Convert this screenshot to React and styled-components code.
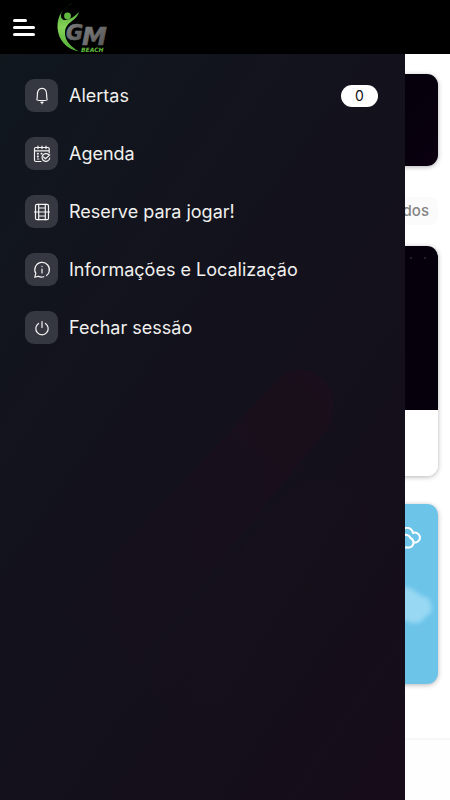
import React from 'react';
import styled, { createGlobalStyle } from 'styled-components';

const GlobalStyle = createGlobalStyle`
  * {
    box-sizing: border-box;
  }

  body {
    margin: 0;
    background: #ffffff;
    font-family: Inter, 'Liberation Sans', sans-serif;
  }

  button {
    font-family: inherit;
    border: 0;
    background: none;
    padding: 0;
    cursor: pointer;
  }
`;

const Page = styled.div`
  min-height: 100vh;
  display: flex;
  flex-direction: column;
`;

const TopBar = styled.header`
  display: flex;
  align-items: center;
  gap: 20px;
  height: 54px;
  padding: 0 12px;
  background: #000000;
`;

const MenuButton = styled.button`
  display: flex;
  flex-direction: column;
  justify-content: center;
  gap: 4px;
  width: 24px;
  height: 24px;
`;

const MenuLine = styled.span`
  width: ${({ $short }) => ($short ? '14px' : '22px')};
  height: 3px;
  margin-left: 1px;
  border-radius: 2px;
  background: #ffffff;
`;

const LogoSvg = styled.svg`
  width: 56px;
  height: 54px;
`;

const Body = styled.div`
  position: relative;
  flex: 1;
  display: flex;
  flex-direction: column;
`;

const Drawer = styled.nav`
  position: absolute;
  top: 0;
  bottom: 0;
  left: 0;
  width: 90%;
  overflow: hidden;
  background: linear-gradient(125deg, #10171d 0%, #13131d 35%, #140f1a 75%, #170c1a 100%);
`;

const DrawerPattern = styled.svg`
  position: absolute;
  inset: 0;
  width: 100%;
  height: 100%;
`;

const MenuList = styled.ul`
  position: relative;
  display: flex;
  flex-direction: column;
  gap: 25px;
  margin: 0;
  padding: 25px 27px 24px 25px;
  list-style: none;
`;

const MenuItem = styled.button`
  display: flex;
  align-items: center;
  gap: 11px;
  width: 100%;
  color: #f0f0ee;
  font-size: 18px;
  line-height: 33px;
  text-align: left;
`;

const IconBox = styled.span`
  display: flex;
  align-items: center;
  justify-content: center;
  width: 33px;
  height: 33px;
  border-radius: 9px;
  background: #353840;

  svg {
    width: 18px;
    height: 18px;
    fill: none;
    stroke: #f4f4f4;
    stroke-width: 1.2;
    stroke-linecap: round;
    stroke-linejoin: round;
  }
`;

const Label = styled.span`
  flex: 1;
`;

const Badge = styled.span`
  width: 37px;
  border-radius: 11px;
  background: #ffffff;
  color: #111111;
  font-size: 14px;
  line-height: 22px;
  text-align: center;
`;

const Feed = styled.main`
  flex: 1;
  display: flex;
  flex-direction: column;
  padding: 20px 12px 54px;
`;

const Card = styled.section`
  border-radius: 11px;
  overflow: hidden;
  box-shadow: 0 1px 5px rgba(0, 0, 0, 0.3);
`;

const Banner = styled(Card)`
  height: 92px;
  background: linear-gradient(135deg, #000000, #05000b 80%, #0b0010);
`;

const Filters = styled.div`
  display: flex;
  justify-content: flex-end;
  margin: 31px 0 21px;
`;

const Filter = styled.button`
  padding: 0 9px;
  border-radius: 8px;
  background: #fbfbfb;
  color: #858585;
  font-size: 15px;
  font-weight: 500;
  line-height: 28px;
`;

const PostImage = styled.div`
  display: flex;
  justify-content: flex-end;
  gap: 12px;
  height: 164px;
  padding: 11px 12px;
  background: #05000b;
`;

const Dot = styled.span`
  width: 2px;
  height: 2px;
  border-radius: 50%;
  background: #2c2a33;
`;

const PostText = styled.div`
  height: 66px;
  background: #ffffff;
`;

const Weather = styled(Card)`
  display: flex;
  flex-direction: column;
  align-items: flex-end;
  gap: 32px;
  height: 180px;
  margin-top: 28px;
  padding: 23px 0 0;
  background: #6cc4e9;
`;

const CloudIcon = styled.svg`
  width: 34px;
  height: 24px;
  margin-right: 15px;
  fill: none;
  stroke: #ffffff;
  stroke-width: 2;
  stroke-linejoin: round;
`;

const CloudPhoto = styled.svg`
  width: 80px;
  height: 44px;
`;

const BottomBar = styled.footer`
  height: 62px;
  background: #fefefe;
  border-top: 2px solid #f7f7f7;
`;

function Logo() {
  return (
    <LogoSvg viewBox="56 0 56 54" role="img" aria-label="GM Beach">
      <defs>
        <linearGradient id="leaf" x1="0" y1="0" x2="0" y2="1">
          <stop offset="0" stopColor="#3f9c2d" />
          <stop offset="0.5" stopColor="#85d257" />
          <stop offset="1" stopColor="#4fae35" />
        </linearGradient>
        <linearGradient id="steel" x1="0" y1="0" x2="1" y2="1">
          <stop offset="0" stopColor="#858585" />
          <stop offset="1" stopColor="#505050" />
        </linearGradient>
      </defs>
      <path
        d="M73 3C63 7 57 16 57.5 28C58.5 40 66 49 79 51.5C71 47 65 41 65 33C65 27 68 24 72 21C75 19 78 16 79 12C75 16 71 19 66 20C62.5 20.5 60.5 18 61 14C63 9 67 6 73 3Z"
        fill="url(#leaf)"
      />
      <circle cx="67.5" cy="16" r="3.4" fill="#5fb83f" />
      <g fontFamily="DejaVu Sans, sans-serif" fontWeight="700" fontStyle="italic">
        <g fill="url(#steel)" stroke="url(#steel)" strokeWidth="0.6">
          <text x="66" y="40" fontSize="21">G</text>
          <text x="82" y="45" fontSize="25">M</text>
        </g>
        <text x="81" y="52" fontSize="6" fill="#62bd3f">BEACH</text>
      </g>
    </LogoSvg>
  );
}

function BellIcon() {
  return (
    <svg viewBox="0 0 18 18">
      <path d="M3.8 12.8C4.3 11.6 4.3 9.8 4.4 7.3C4.4 3.6 6.2 1.3 9 1.3S13.6 3.6 13.6 7.3C13.7 9.8 13.7 11.6 14.2 12.8C14.2 13.8 3.8 13.8 3.8 12.8Z" />
      <path d="M8 15.4H10M9 15.4V16.7" />
    </svg>
  );
}

function AgendaIcon() {
  return (
    <svg viewBox="0 0 18 18">
      <path d="M8 16.5H3Q1.5 16.5 1.5 15V3.7Q1.5 2.5 2.7 2.5H15Q16.2 2.5 16.2 3.7V8M1.5 5.8H16.2M5 1.2V3.7M9 1.2V3.7M13 1.2V3.7" />
      <path d="M4.5 8.3H5.2V9H4.5ZM8.2 8.3H8.9V9H8.2ZM4.5 11.2H5.2V11.8H4.5ZM4.5 14H5.8" />
      <path d="M15.6 9.6A3.9 3.9 0 1 0 16.8 13M10.6 12L12.5 13.8L16.8 9.9" />
    </svg>
  );
}

function CourtIcon() {
  return (
    <svg viewBox="0 0 18 18">
      <rect x="2.5" y="1.3" width="13" height="15.4" rx="1.5" />
      <path d="M5.7 1.3V16.7M12.3 1.3V16.7M5.7 5H12.3M5.7 13H12.3M1.5 9H16.5" />
    </svg>
  );
}

function InfoIcon() {
  return (
    <svg viewBox="0 0 18 18">
      <path d="M10.8 15.7A7 7 0 0 1 5.3 15.2L1.8 16.3L2.8 12.4A7.3 7.3 0 1 1 16.1 10.8Q15.4 13.2 13.5 14.5" />
      <path d="M9 8V12" />
      <path d="M9 5.4V5.6" />
    </svg>
  );
}

function PowerIcon() {
  return (
    <svg viewBox="0 0 18 18">
      <path d="M9 2.5V8.5M5.6 4.4A6.2 6.2 0 1 0 12.4 4.4" />
    </svg>
  );
}

const menuItems = [
  { label: 'Alertas', icon: BellIcon, count: 0 },
  { label: 'Agenda', icon: AgendaIcon },
  { label: 'Reserve para jogar!', icon: CourtIcon },
  { label: 'Informações e Localização', icon: InfoIcon },
  { label: 'Fechar sessão', icon: PowerIcon },
];

function SideMenu() {
  return (
    <Drawer>
      <DrawerPattern viewBox="0 0 405 746" preserveAspectRatio="none" aria-hidden="true">
        <defs>
          <linearGradient id="streak" x1="1" y1="0" x2="0" y2="1">
            <stop offset="0" stopColor="#1e0e1b" stopOpacity="0.6" />
            <stop offset="1" stopColor="#1e0e1b" stopOpacity="0" />
          </linearGradient>
        </defs>
        <path d="M277 326C300 302 338 322 333 358C332 368 328 374 323 380L134 612L60 560Z" fill="url(#streak)" />
        <path d="M290 440C320 412 372 432 372 470C372 480 368 488 360 498L232 660L120 640Z" fill="url(#streak)" opacity="0.3" />
      </DrawerPattern>
      <MenuList>
        {menuItems.map(({ label, icon: Icon, count }) => (
          <li key={label}>
            <MenuItem type="button">
              <IconBox>
                <Icon />
              </IconBox>
              <Label>{label}</Label>
              {count !== undefined && <Badge>{count}</Badge>}
            </MenuItem>
          </li>
        ))}
      </MenuList>
    </Drawer>
  );
}

function App() {
  return (
    <Page>
      <GlobalStyle />
      <TopBar>
        <MenuButton type="button" aria-label="Menu">
          <MenuLine $short />
          <MenuLine />
          <MenuLine />
        </MenuButton>
        <Logo />
      </TopBar>
      <Body>
        <Feed>
          <Banner />
          <Filters>
            <Filter type="button">Todos</Filter>
          </Filters>
          <Card>
            <PostImage>
              <Dot />
              <Dot />
            </PostImage>
            <PostText />
          </Card>
          <Weather>
            <CloudIcon viewBox="0 0 34 24">
              <path d="M6 20.5H20A5 5 0 0 0 21.5 11Q20 7.5 16.5 8A7 7 0 0 0 4 10A5.5 5.5 0 0 0 6 20.5Z" />
              <path d="M12 4A6.5 6.5 0 0 1 24 6A5 5 0 1 1 27 15.5H25" />
            </CloudIcon>
            <CloudPhoto viewBox="0 0 80 44" aria-hidden="true">
              <defs>
                <filter id="soft">
                  <feGaussianBlur stdDeviation="2" />
                </filter>
              </defs>
              <path
                d="M10 24Q14 8 30 8Q42 0 54 6Q62 13 70 15Q75 22 73 30Q66 34 64 38Q56 43 46 37Q24 40 10 24Z"
                fill="#98d8f3"
                filter="url(#soft)"
              />
            </CloudPhoto>
          </Weather>
        </Feed>
        <BottomBar />
        <SideMenu />
      </Body>
    </Page>
  );
}

export default App;
